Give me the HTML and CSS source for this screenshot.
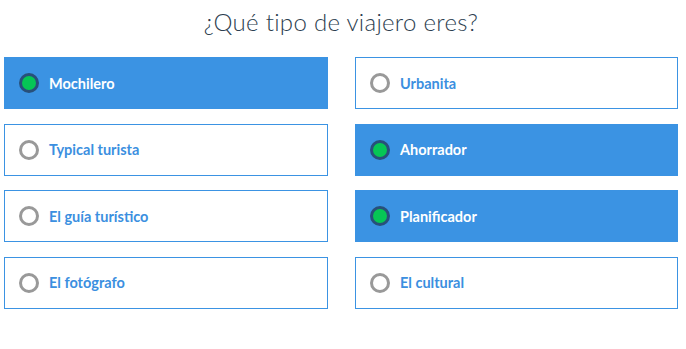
FILE: index.html
```html
<!DOCTYPE html>
<html lang="es">
<head>
<meta charset="utf-8">
<title>¿Qué tipo de viajero eres?</title>
<link rel="stylesheet" href="styles.css">
</head>
<body>
<div class="quiz">
  <h1 class="title">¿Qué tipo de viajero eres?</h1>
  <div class="grid">
    <label class="option selected"><span class="radio"></span><span class="label">Mochilero</span></label>
    <label class="option"><span class="radio"></span><span class="label">Urbanita</span></label>
    <label class="option"><span class="radio"></span><span class="label">Typical turista</span></label>
    <label class="option selected"><span class="radio"></span><span class="label">Ahorrador</span></label>
    <label class="option"><span class="radio"></span><span class="label">El guía turístico</span></label>
    <label class="option selected"><span class="radio"></span><span class="label">Planificador</span></label>
    <label class="option"><span class="radio"></span><span class="label">El fotógrafo</span></label>
    <label class="option"><span class="radio"></span><span class="label">El cultural</span></label>
  </div>
</div>
</body>
</html>
```
FILE: styles.css
```css
html, body {
  margin: 0;
  padding: 0;
  background: #ffffff;
}
body {
  font-family: Lato, "Open Sans", "Liberation Sans", sans-serif;
}
.quiz {
  padding: 0 8px 0 4px;
}
.title {
  margin: 0;
  padding-top: 7px;
  height: 57px;
  box-sizing: border-box;
  text-align: center;
  font-weight: 300;
  font-size: 24px;
  line-height: 30px;
  color: #2c3e50;
  letter-spacing: 0.3px;
}
.grid {
  display: grid;
  grid-template-columns: 324px 323px;
  column-gap: 27px;
  row-gap: 14.67px;
}
.option {
  display: flex;
  align-items: center;
  height: 52px;
  box-sizing: border-box;
  border: 1px solid #3b93e3;
  background: #ffffff;
  padding-left: 14px;
  cursor: pointer;
}
.option.selected {
  background: #3b93e3;
}
.radio {
  width: 20px;
  height: 20px;
  box-sizing: border-box;
  border-radius: 50%;
  border: 3px solid #999999;
  background: #ffffff;
  flex: none;
}
.option.selected .radio {
  border-color: #28507a;
  background: #06c655;
}
.label {
  margin-left: 10px;
  font-weight: 700;
  font-size: 14.5px;
  color: #3b8fe0;
}
.option.selected .label {
  color: #ffffff;
}
```
